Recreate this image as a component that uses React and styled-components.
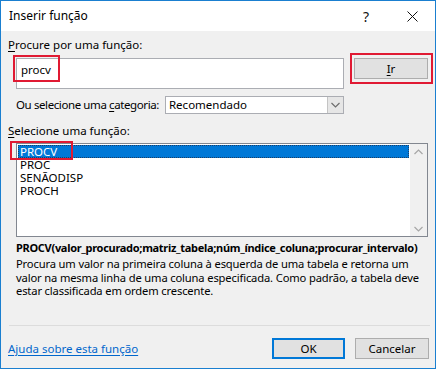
import React from 'react';
import styled, { createGlobalStyle } from 'styled-components';

const GlobalStyle = createGlobalStyle`
  html, body {
    margin: 0;
    padding: 0;
    background: #ffffff;
  }
  * {
    box-sizing: border-box;
  }
`;

const Window = styled.div`
  position: relative;
  width: 436px;
  height: 369px;
  border: 1px solid #1a7fd0;
  background: #f0f0f0;
  font-family: "Noto Sans", "Open Sans", sans-serif;
  font-size: 11.5px;
  color: #000;
  display: flex;
  flex-direction: column;
  overflow: hidden;
`;

const TitleBar = styled.div`
  height: 30px;
  background: #ffffff;
  display: flex;
  align-items: center;
  padding-left: 8px;
`;

const Title = styled.div`
  flex: 1;
  font-size: 12px;
  line-height: 16px;
`;

const TitleButton = styled.div`
  width: 46px;
  height: 30px;
  display: flex;
  align-items: center;
  justify-content: center;
  font-size: 14px;
  color: #111;
`;

const Body = styled.div`
  position: relative;
  flex: 1;
  display: flex;
  flex-direction: column;
  padding: 6px 6px 0 7px;
`;

const Label = styled.div`
  line-height: 16px;
  margin-top: ${p => p.$top || 0}px;
  letter-spacing: ${p => p.$tight || 0}px;
  white-space: nowrap;
`;

const Key = styled.span`
  text-decoration: underline;
  text-underline-offset: 2px;
`;

const SearchRow = styled.div`
  display: flex;
  align-items: flex-start;
  gap: 10px;
  margin-top: 5px;
  padding-left: 8px;
`;

const SearchBox = styled.div`
  width: 328px;
  height: 31px;
  background: #fff;
  border: 1px solid #abadb3;
  padding: 3px 4px;
  line-height: 16px;
`;

const Button = styled.div`
  width: ${p => p.$w || 74}px;
  height: 21px;
  background: #e1e1e1;
  border: ${p => (p.$default ? '2px solid #0078d7' : '1px solid #adadad')};
  display: flex;
  align-items: center;
  justify-content: center;
  line-height: 16px;
`;

const Highlight = styled.div`
  position: absolute;
  left: ${p => p.$l}px;
  top: ${p => p.$t}px;
  width: ${p => p.$w}px;
  height: ${p => p.$h}px;
  border: 2px solid #e01a33;
  pointer-events: none;
`;

const CategoryRow = styled.div`
  display: flex;
  align-items: center;
  margin-top: 7px;
  padding-left: 8px;
  gap: 6px;
`;

const Select = styled.div`
  width: 179px;
  height: 18px;
  background: #fff;
  border: 1px solid #abadb3;
  display: flex;
  align-items: center;
`;

const SelectText = styled.div`
  flex: 1;
  padding-left: 3px;
  line-height: 16px;
`;

const SelectArrow = styled.div`
  width: 16px;
  height: 16px;
  background: #e6e6e6;
  border-left: 1px solid #c4c4c4;
  display: flex;
  align-items: center;
  justify-content: center;
`;

const ListBox = styled.div`
  display: flex;
  margin: 4px 0 0 8px;
  width: 412px;
  height: 94px;
  background: #fff;
  border: 1px solid #828790;
`;

const ListItems = styled.div`
  flex: 1;
  padding: 1px 1px 0 1px;
`;

const Item = styled.div`
  height: 13px;
  line-height: 13px;
  font-size: 11.5px;
  padding-left: 2px;
  white-space: nowrap;
  color: ${p => (p.$selected ? '#fff' : '#000')};
  background: ${p => (p.$selected ? '#0078d7' : 'transparent')};
  outline: ${p => (p.$selected ? '1px dotted #1c3f66' : 'none')};
  outline-offset: -1px;
`;

const ScrollBar = styled.div`
  width: 17px;
  background: #f0f0f0;
  display: flex;
  flex-direction: column;
  justify-content: space-between;
  align-items: center;
  padding: 5px 0 4px;
`;

const Signature = styled.div`
  margin: 3px 0 0 8px;
  font-size: 11px;
  font-weight: 700;
  letter-spacing: -0.3px;
  line-height: 16px;
  white-space: nowrap;
`;

const Description = styled.div`
  margin: 1px 0 0 8px;
  width: 410px;
  font-size: 11.2px;
  letter-spacing: -0.15px;
  line-height: 13.5px;
`;

const Separator = styled.div`
  margin: auto 0 0 1px;
  height: 1px;
  width: 421px;
  background: #dcdcdc;
`;

const Footer = styled.div`
  display: flex;
  align-items: center;
  margin: 12px 0 9px 0;
  gap: 10px;
`;

const HelpLink = styled.div`
  flex: 1;
  color: #0066cc;
  text-decoration: underline;
  text-underline-offset: 2px;
  line-height: 16px;
`;

const Chevron = ({ up, color = '#a6a6a6' }) => (
  <svg width="9" height="6" viewBox="0 0 9 6">
    <polyline
      points={up ? '0.5,5 4.5,1 8.5,5' : '0.5,1 4.5,5 8.5,1'}
      fill="none"
      stroke={color}
      strokeWidth="1.2"
    />
  </svg>
);

const functions = ['PROCV', 'PROC', 'SENÃODISP', 'PROCH'];

export default function App() {
  return (
    <>
      <GlobalStyle />
      <Window>
        <TitleBar>
          <Title>Inserir função</Title>
          <TitleButton>?</TitleButton>
          <TitleButton>
            <svg width="11" height="11" viewBox="0 0 11 11">
              <path d="M0.5 0.5 L10.5 10.5 M10.5 0.5 L0.5 10.5" stroke="#111" strokeWidth="1" />
            </svg>
          </TitleButton>
        </TitleBar>
        <Body>
          <Label>
            <Key>P</Key>rocure por uma função:
          </Label>
          <SearchRow>
            <SearchBox>procv</SearchBox>
            <Button>
              <Key>I</Key>r
            </Button>
          </SearchRow>
          <CategoryRow>
            <Label $tight={-0.4}>
              Ou selecione uma <Key>c</Key>ategoria:
            </Label>
            <Select>
              <SelectText>Recomendado</SelectText>
              <SelectArrow>
                <Chevron color="#6d6d6d" />
              </SelectArrow>
            </Select>
          </CategoryRow>
          <Label $top={9}>
            <Key>S</Key>elecione uma função:
          </Label>
          <ListBox>
            <ListItems>
              {functions.map((f, i) => (
                <Item key={f} $selected={i === 0}>
                  {f}
                </Item>
              ))}
            </ListItems>
            <ScrollBar>
              <Chevron up />
              <Chevron />
            </ScrollBar>
          </ListBox>
          <Signature>PROCV(valor_procurado;matriz_tabela;núm_índice_coluna;procurar_intervalo)</Signature>
          <Description>
            Procura um valor na primeira coluna à esquerda de uma tabela e retorna um valor na mesma
            linha de uma coluna especificada. Como padrão, a tabela deve estar classificada em ordem
            crescente.
          </Description>
          <Separator />
          <Footer>
            <HelpLink>Ajuda sobre esta função</HelpLink>
            <Button $default $w={73}>OK</Button>
            <Button>Cancelar</Button>
          </Footer>
          <Highlight $l={12} $t={24} $w={47} $h={27} />
          <Highlight $l={349} $t={22} $w={83} $h={31} />
          <Highlight $l={9} $t={110} $w={63} $h={19} />
        </Body>
      </Window>
    </>
  );
}
